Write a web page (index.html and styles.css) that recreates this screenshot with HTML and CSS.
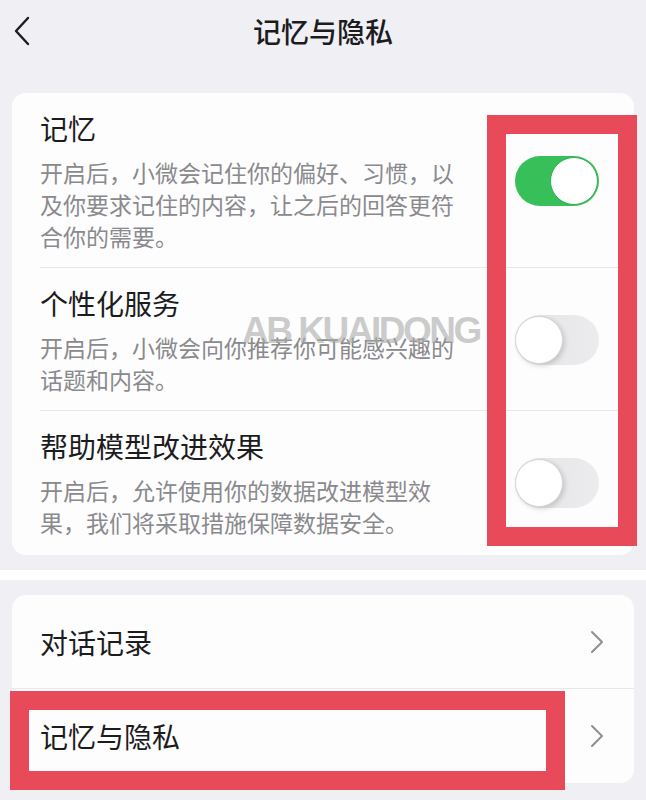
FILE: index.html
```html
<!DOCTYPE html>
<html lang="zh-CN">

<head>
    <meta charset="UTF-8">
    <meta name="viewport" content="width=device-width, initial-scale=1.0">
    <title>记忆与隐私</title>
    <link rel="stylesheet" href="styles.css">
</head>

<body>
    <header class="nav">
        <button class="back" aria-label="返回">
            <svg width="18" height="30" viewBox="0 0 18 30">
                <path d="M15 2 L3 15 L15 28" fill="none" stroke="#1c1c1e" stroke-width="2.4" stroke-linecap="round" stroke-linejoin="round"/>
            </svg>
        </button>
        <h1>记忆与隐私</h1>
        <span></span>
    </header>

    <main class="page">
        <section class="card settings">
            <div class="row">
                <div class="row-text">
                    <h2>记忆</h2>
                    <p>开启后，小微会记住你的偏好、习惯，以及你要求记住的内容，让之后的回答更符合你的需要。</p>
                </div>
                <span class="switch on"><span class="knob"></span></span>
            </div>
            <div class="row">
                <div class="row-text">
                    <h2>个性化服务</h2>
                    <p>开启后，小微会向你推荐你可能感兴趣的话题和内容。</p>
                </div>
                <span class="switch"><span class="knob"></span></span>
            </div>
            <div class="row">
                <div class="row-text">
                    <h2>帮助模型改进效果</h2>
                    <p>开启后，允许使用你的数据改进模型效果，我们将采取措施保障数据安全。</p>
                </div>
                <span class="switch"><span class="knob"></span></span>
            </div>
        </section>

        <div class="seam"></div>

        <section class="card links">
            <a class="link-row" href="#">
                <span>对话记录</span>
                <svg width="14" height="24" viewBox="0 0 14 24">
                    <path d="M2 2 L12 12 L2 22" fill="none" stroke="#8e8e93" stroke-width="2" stroke-linecap="round" stroke-linejoin="round"/>
                </svg>
            </a>
            <a class="link-row" href="#">
                <span>记忆与隐私</span>
                <svg width="14" height="24" viewBox="0 0 14 24">
                    <path d="M2 2 L12 12 L2 22" fill="none" stroke="#8e8e93" stroke-width="2" stroke-linecap="round" stroke-linejoin="round"/>
                </svg>
            </a>
        </section>
    </main>

    <!-- annotation overlays -->
    <div class="mark mark-switches"></div>
    <div class="mark mark-link"></div>
    <div class="watermark">AB KUAIDONG</div>
</body>

</html>
```

FILE: styles.css
```css
* {
    box-sizing: border-box;
    margin: 0;
    padding: 0;
    font-family: "Noto Sans CJK SC", "Noto Sans", sans-serif;
}

body {
    position: relative;
    width: 646px;
    height: 800px;
    overflow: hidden;
    background: #efeff4;
    color: #1c1c1e;
}

.nav {
    display: grid;
    grid-template-columns: 60px 1fr 60px;
    align-items: center;
    height: 62px;
}

.back {
    display: flex;
    align-items: center;
    border: none;
    background: none;
    padding-left: 13px;
    height: 62px;
}

.nav h1 {
    text-align: center;
    font-size: 28px;
    font-weight: 500;
    line-height: 36px;
}

.page {
    padding-top: 31px;
}

.card {
    margin: 0 12px;
    background: #fdfdfd;
    border-radius: 14px;
    overflow: hidden;
}

.row {
    display: flex;
    align-items: center;
    justify-content: space-between;
    margin-left: 28px;
    padding: 17px 35px 15px 0;
    border-bottom: 1px solid #e8e8ea;
}

.row:last-child {
    border-bottom: none;
    padding-bottom: 17px;
}

.row-text {
    width: 430px;
}

.row-text h2 {
    font-size: 28px;
    font-weight: 400;
    line-height: 36px;
    color: #1c1c1e;
    margin-bottom: 10px;
}

.row-text p {
    font-size: 23px;
    line-height: 32px;
    color: #8a8a8e;
}

.switch {
    position: relative;
    width: 84px;
    height: 50px;
    border-radius: 25px;
    background: linear-gradient(90deg, #e4e4e6, #ececee);
    flex-shrink: 0;
}

.switch .knob {
    position: absolute;
    top: 1px;
    left: 0;
    width: 48px;
    height: 48px;
    border-radius: 50%;
    background: #ffffff;
    border: 1px solid #d6d6d8;
    box-shadow: 2px 2px 5px rgba(0, 0, 0, 0.15);
}

.switch.on {
    background: #37c05a;
}

.switch.on .knob {
    left: auto;
    right: 1px;
    border: 1px solid #2fb050;
    box-shadow: none;
}

.seam {
    height: 10px;
    margin: 15px 0;
    background: #ffffff;
}

.link-row {
    display: flex;
    align-items: center;
    justify-content: space-between;
    height: 94px;
    padding: 0 30px 0 28px;
    color: #1c1c1e;
    text-decoration: none;
    font-size: 28px;
    line-height: 36px;
    border-bottom: 1px solid #e8e8ea;
}

.link-row:last-child {
    border-bottom: none;
}

.mark {
    position: absolute;
    border: 19px solid #e94a5a;
}

.mark-switches {
    left: 487px;
    top: 115px;
    width: 150px;
    height: 431px;
}

.mark-link {
    left: 10px;
    top: 691px;
    width: 555px;
    height: 99px;
}

.watermark {
    position: absolute;
    left: 242px;
    top: 312px;
    font-family: "Liberation Sans", Arial, sans-serif;
    font-weight: bold;
    font-size: 37px;
    line-height: 37px;
    letter-spacing: -2.5px;
    color: rgba(170, 170, 170, 0.6);
    white-space: nowrap;
}
```
